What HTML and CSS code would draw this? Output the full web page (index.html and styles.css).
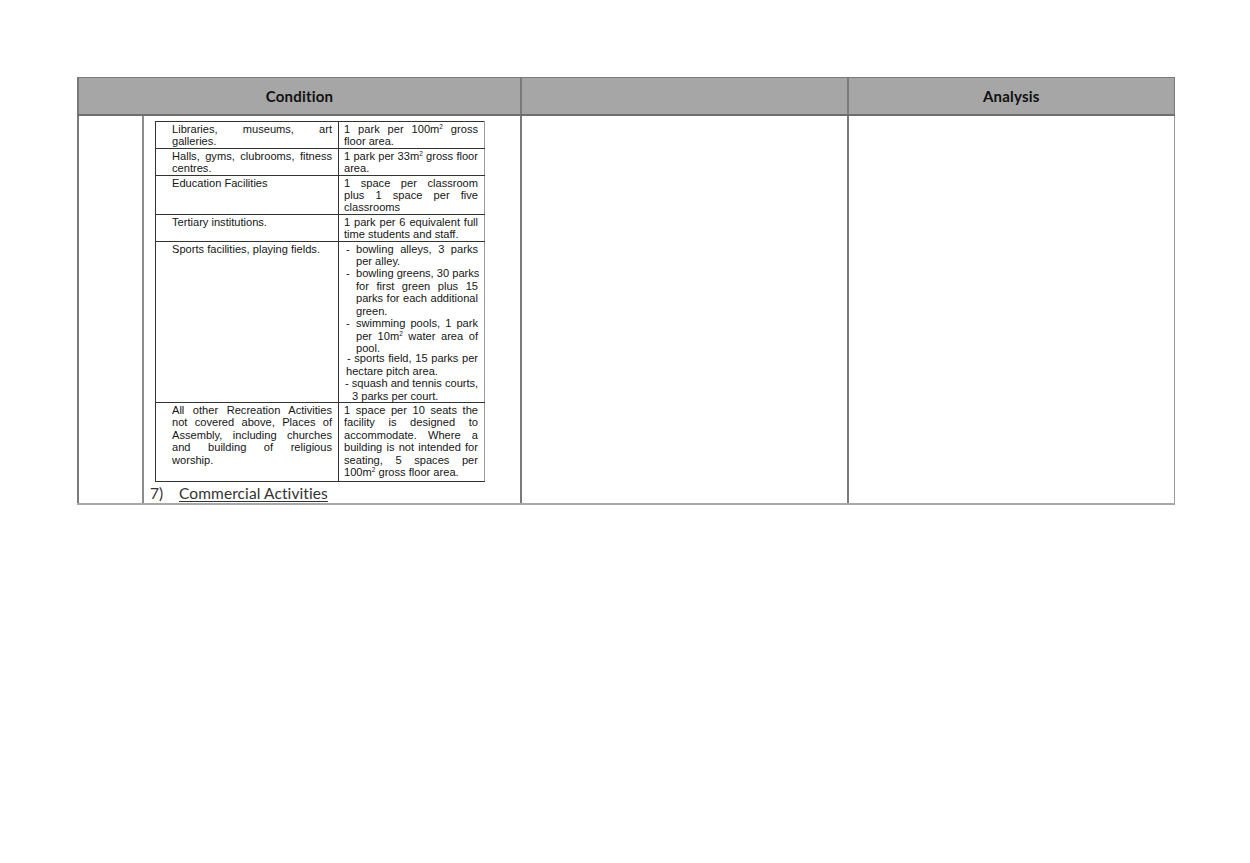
FILE: index.html
```html
<!DOCTYPE html>
<html>
<head>
<meta charset="utf-8">
<link rel="stylesheet" href="styles.css">
</head>
<body>
<div class="page">
  <table class="outer">
    <colgroup>
      <col class="c1"><col class="c2"><col class="c3">
    </colgroup>
    <thead>
      <tr>
        <th>Condition</th>
        <th></th>
        <th>Analysis</th>
      </tr>
    </thead>
    <tbody>
      <tr>
        <td class="cond">
          <div class="cond-inner">
            <div class="indent">
              <table class="parking">
                <tr>
                  <td class="use"><span class="j">Libraries, museums, art</span><span class="l">galleries.</span></td>
                  <td class="req"><span class="j">1 park per 100m<sup>2</sup> gross</span><span class="l">floor area.</span></td>
                </tr>
                <tr>
                  <td class="use"><span class="j">Halls, gyms, clubrooms, fitness</span><span class="l">centres.</span></td>
                  <td class="req"><span class="j">1 park per 33m<sup>2</sup> gross floor</span><span class="l">area.</span></td>
                </tr>
                <tr>
                  <td class="use"><span class="l">Education Facilities</span></td>
                  <td class="req"><span class="j">1 space per classroom</span><span class="j">plus 1 space per five</span><span class="l">classrooms</span></td>
                </tr>
                <tr>
                  <td class="use"><span class="l">Tertiary institutions.</span></td>
                  <td class="req"><span class="j">1 park per 6 equivalent full</span><span class="l">time students and staff.</span></td>
                </tr>
                <tr>
                  <td class="use"><span class="l">Sports facilities, playing fields.</span></td>
                  <td class="req list">
                    <div class="li"><span class="d">-</span><span class="t"><span class="j">bowling alleys, 3 parks</span><span class="l">per alley.</span></span></div>
                    <div class="li"><span class="d">-</span><span class="t"><span class="j">bowling greens, 30 parks</span><span class="j">for first green plus 15</span><span class="j">parks for each additional</span><span class="l">green.</span></span></div>
                    <div class="li"><span class="d">-</span><span class="t"><span class="j">swimming pools, 1 park</span><span class="j">per 10m<sup>2</sup> water area of</span><span class="l">pool.</span></span></div>
                    <div class="plain tight"><span class="j sf">- sports field, 15 parks per</span><span class="l">hectare pitch area.</span></div>
                    <div class="plain sq"><span class="l">- squash and tennis courts,</span><span class="l sq2">3 parks per court.</span></div>
                  </td>
                </tr>
                <tr class="last">
                  <td class="use"><span class="j">All other Recreation Activities</span><span class="j">not covered above, Places of</span><span class="j">Assembly, including churches</span><span class="j">and building of religious</span><span class="l">worship.</span></td>
                  <td class="req"><span class="j">1 space per 10 seats the</span><span class="j">facility is designed to</span><span class="j">accommodate. Where a</span><span class="j">building is not intended for</span><span class="j">seating, 5 spaces per</span><span class="l">100m<sup>2</sup> gross floor area.</span></td>
                </tr>
              </table>
              <div class="heading"><span class="num">7)</span><span class="title">Commercial Activities</span></div>
            </div>
          </div>
        </td>
        <td></td>
        <td></td>
      </tr>
    </tbody>
  </table>
</div>
</body>
</html>
```

FILE: styles.css
```css
html, body {
  margin: 0;
  padding: 0;
  background: #ffffff;
}

.page {
  padding: 77px 0 0 77px;
}

.outer {
  border-collapse: collapse;
  table-layout: fixed;
  width: 1096px;
}

.c1 { width: 443px; }
.c2 { width: 327px; }
.c3 { width: 326px; }

.outer th {
  background: #a6a6a6;
  height: 36px;
  padding: 0;
  font-family: "Lato", "Liberation Sans", sans-serif;
  font-weight: bold;
  font-size: 15px;
  letter-spacing: 0.2px;
  color: #111;
  border: 1px solid #7a7a7a;
  border-bottom: 2px solid #6e6e6e;
  border-left-width: 2px;
  text-align: center;
  vertical-align: middle;
}

.outer td {
  border: 1px solid #8a8a8a;
  border-left: 2px solid #7a7a7a;
  border-bottom: 2px solid #a8a8a8;
  padding: 0;
  vertical-align: top;
}

.outer td:last-child {
  border-right: 1px solid #9a9a9a;
}

.cond-inner {
  padding-left: 63px;
}

.indent {
  border-left: 2px solid #8c8c8c;
  padding: 5px 0 0 11px;
}

.parking {
  border-collapse: collapse;
  table-layout: fixed;
  width: 330px;
  font-family: "Liberation Sans", Arial, sans-serif;
  font-size: 11.1px;
  line-height: 12.4px;
  color: #151515;
}

.parking td {
  border: 1px solid #333;
  padding: 1px 6px 0 5px;
  vertical-align: top;
}

.parking td.use {
  width: 183px;
  padding-left: 16px;
  padding-right: 6px;
  box-sizing: border-box;
}

.parking tr.last td {
  padding-bottom: 3px;
}

.j {
  display: block;
  text-align: justify;
  text-align-last: justify;
  white-space: nowrap;
}

.l {
  display: block;
  text-align: left;
  white-space: nowrap;
}

.parking sup {
  font-size: 6.5px;
  line-height: 0;
  vertical-align: 4px;
}

.parking td.list {
  padding-left: 7px;
}

.li {
  display: flex;
}

.li .d {
  width: 10px;
  flex: none;
}

.li .t {
  flex: 1;
  min-width: 0;
}

.tight {
  margin-top: -2px;
}

.sf {
  padding-left: 1px;
  white-space: normal;
}

.sq {
  margin-left: -1px;
}

.sq2 {
  padding-left: 7px;
}

.heading {
  font-family: "Lato", "DejaVu Sans", sans-serif;
  font-size: 15.5px;
  letter-spacing: 0.1px;
  color: #333;
  padding-top: 2px;
  height: 19px;
  line-height: 19px;
  display: flex;
}

.heading .num {
  width: 29px;
  margin-left: -5px;
}

.heading .title {
  text-decoration: underline;
  text-decoration-thickness: 1px;
  text-underline-offset: 2px;
}
```
